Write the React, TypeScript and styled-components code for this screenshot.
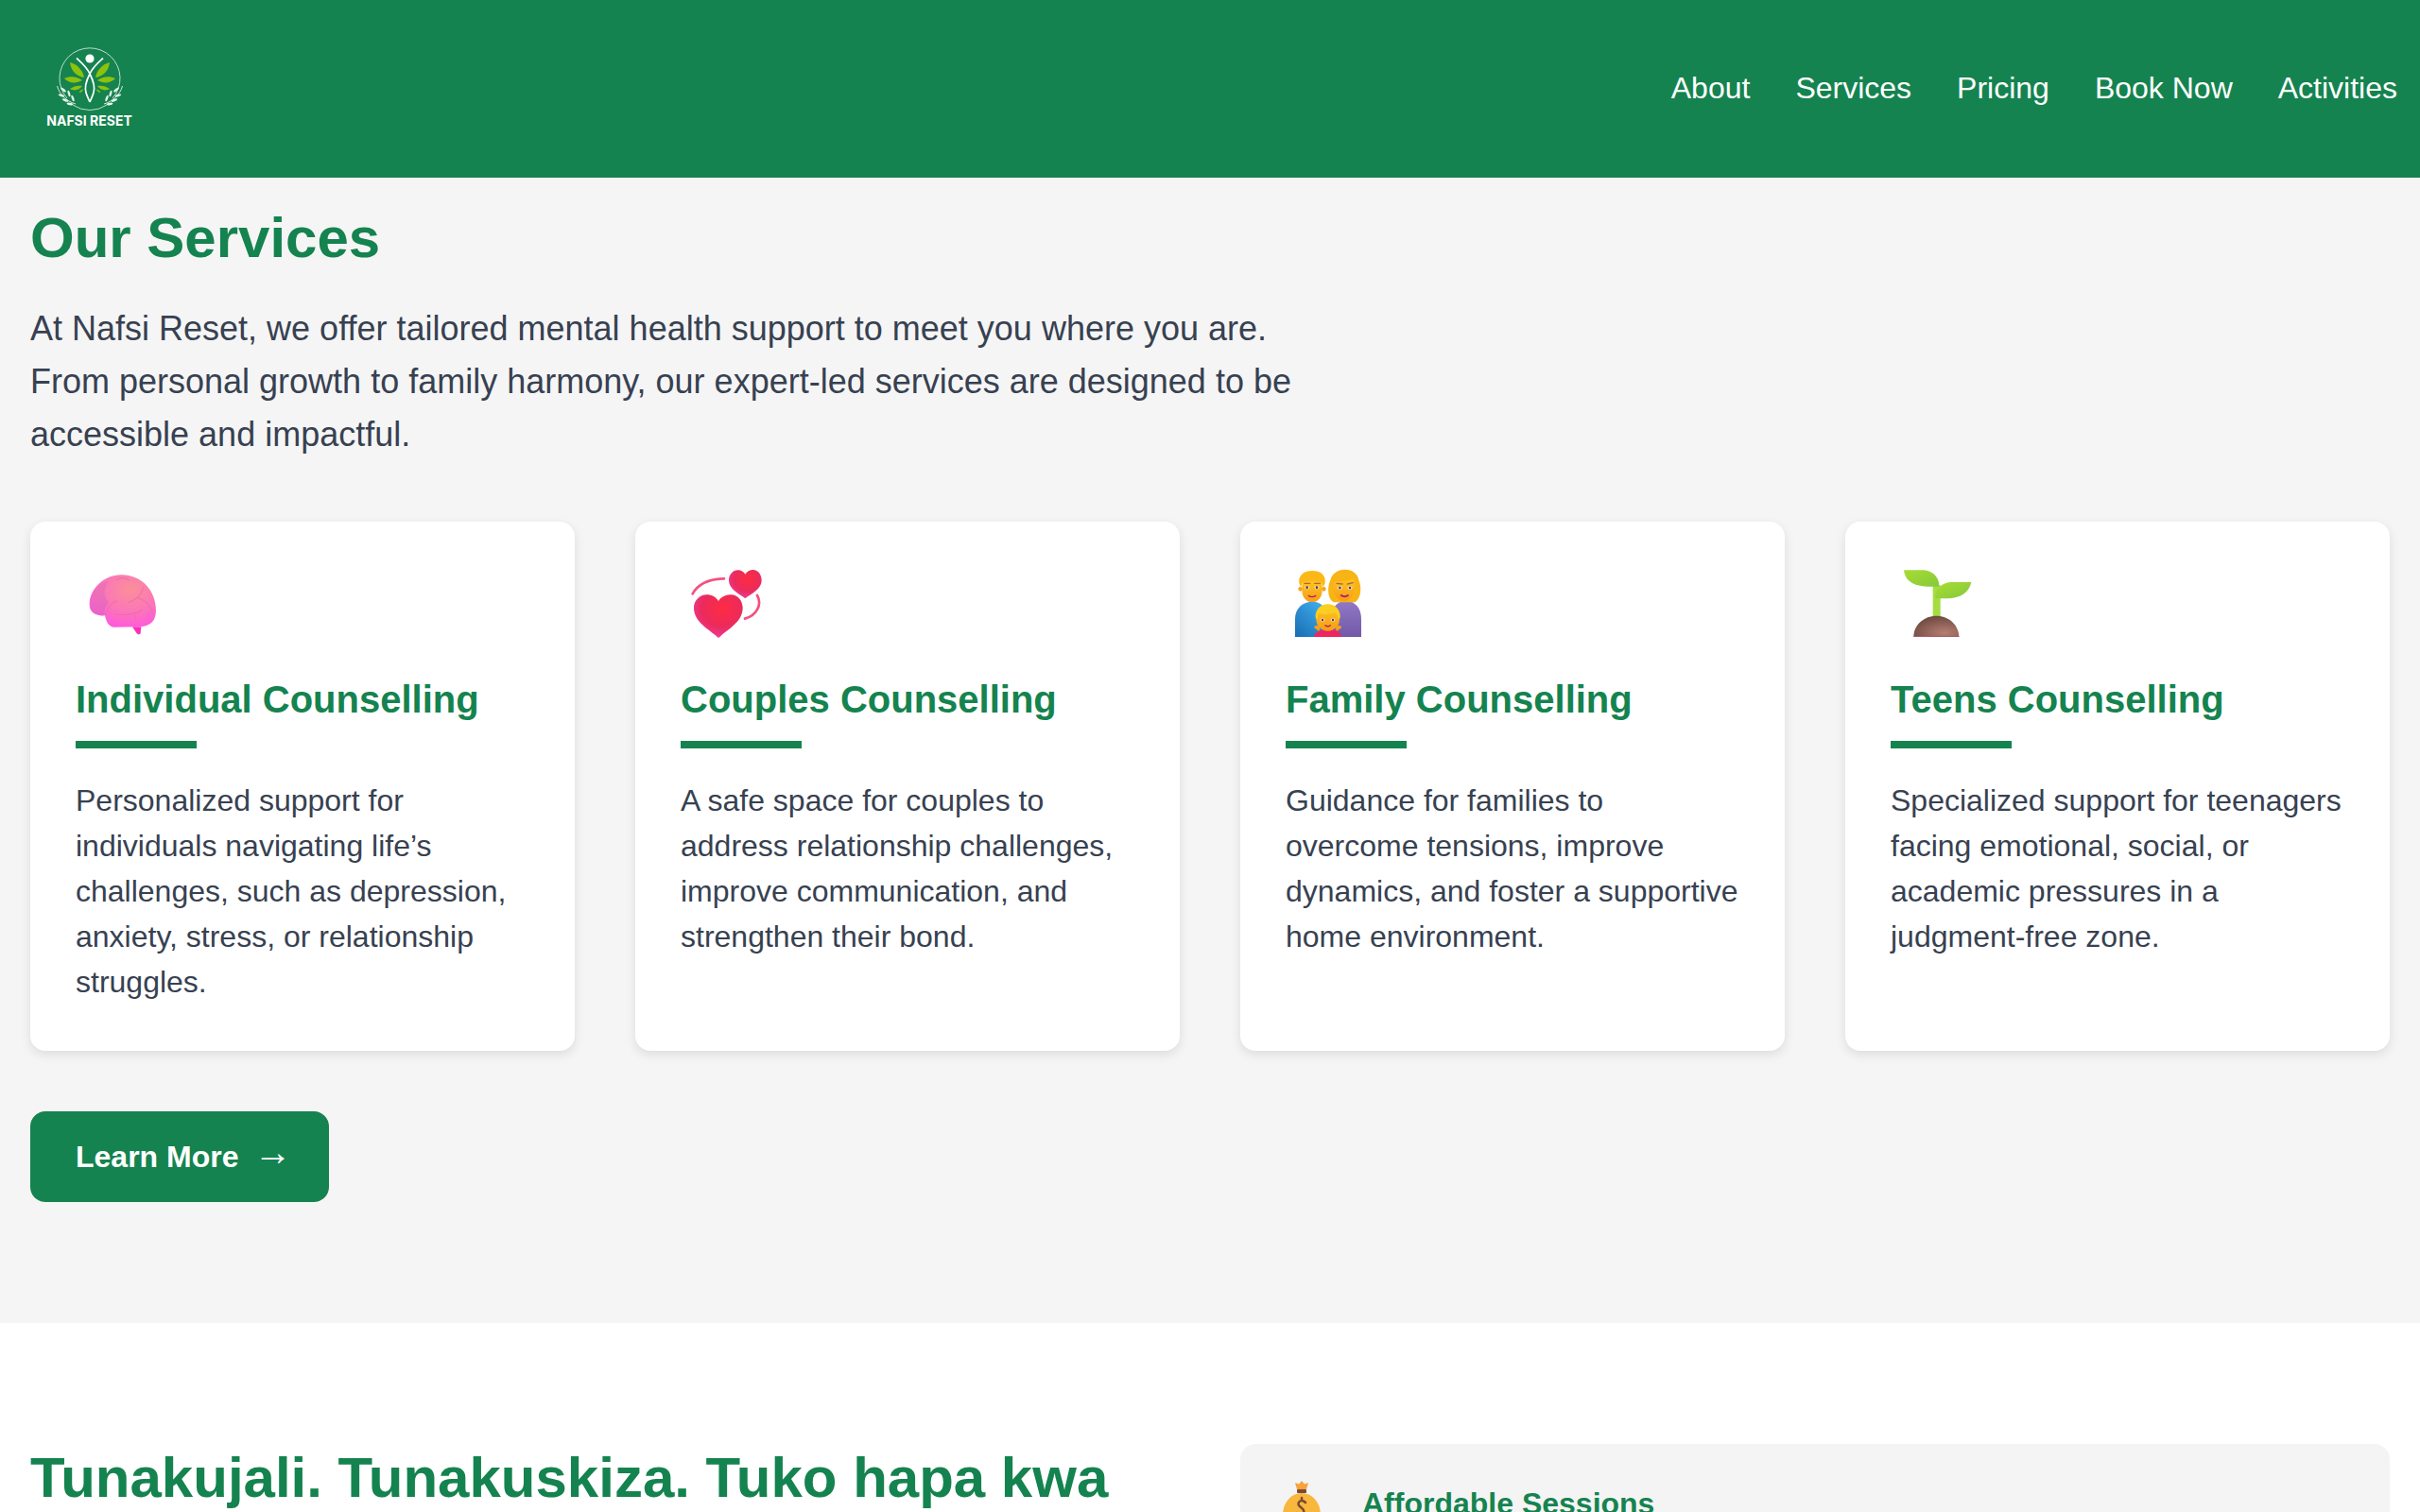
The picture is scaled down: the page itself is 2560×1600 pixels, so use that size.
import React from "react";
import styled, { createGlobalStyle } from "styled-components";

const GREEN = "#15834f";
const SLATE = "#374151";

const GlobalStyle = createGlobalStyle`
  html, body {
    margin: 0;
    padding: 0;
    height: 1600px;
    overflow: hidden;
    background: #ffffff;
    font-family: "Liberation Sans", Arial, sans-serif;
  }
  * {
    box-sizing: border-box;
  }
`;

const Header = styled.header`
  height: 188px;
  background: ${GREEN};
  display: flex;
  align-items: center;
  justify-content: space-between;
  padding-left: 50px;
`;

const Logo = styled.div`
  display: flex;
  flex-direction: column;
  align-items: center;
  width: 89px;
  margin-top: -4px;
`;

const LogoText = styled.span`
  font-family: Inter, "Liberation Sans", sans-serif;
  font-weight: 700;
  font-size: 14px;
  line-height: 16px;
  color: #fff;
  white-space: nowrap;
`;

const Nav = styled.nav`
  display: flex;
  gap: 48px;
  padding-right: 24px;
  margin-top: -3px;
`;

const NavLink = styled.a`
  font-size: 32px;
  line-height: 40px;
  color: #fff;
`;

const ServicesSection = styled.section`
  background: #f5f5f5;
  height: 1212px;
  padding: 28px 32px 0;
`;

const Title = styled.h2`
  margin: 0;
  font-size: 60px;
  line-height: 72px;
  font-weight: 700;
  color: ${GREEN};
`;

const Intro = styled.p`
  margin: 32px 0 0;
  width: 1400px;
  font-size: 36px;
  line-height: 56px;
  color: ${SLATE};
`;

const CardGrid = styled.div`
  display: grid;
  grid-template-columns: repeat(4, 576px);
  gap: 64px;
  margin-top: 64px;
`;

const Card = styled.article`
  height: 560px;
  background: #fff;
  border-radius: 16px;
  padding: 48px;
  box-shadow: 0 4px 12px rgba(0, 0, 0, 0.1);
`;

const CardIcon = styled.div`
  height: 80px;
`;

const CardTitle = styled.h3`
  margin: 36px 0 0;
  font-size: 40px;
  line-height: 48px;
  font-weight: 700;
  color: ${GREEN};
`;

const Rule = styled.div`
  width: 128px;
  height: 8px;
  margin-top: 20px;
  background: ${GREEN};
`;

const CardText = styled.p`
  margin: 31px 0 0;
  font-size: 32px;
  line-height: 48px;
  color: ${SLATE};
`;

const LearnMore = styled.a`
  display: inline-flex;
  align-items: center;
  gap: 16px;
  height: 96px;
  margin-top: 64px;
  padding: 0 48px;
  border-radius: 16px;
  background: ${GREEN};
  color: #fff;
  font-size: 32px;
  font-weight: 700;
`;

const Arrow = styled.span`
  width: 32px;
  margin-top: -10px;
  font-size: 40px;
  font-weight: 400;
  line-height: 40px;
  text-align: left;
  white-space: nowrap;
`;

const TaglineSection = styled.section`
  display: grid;
  grid-template-columns: 1216px 1216px;
  gap: 64px;
  padding: 128px 32px 0;
  background: #fff;
`;

const Tagline = styled.h2`
  margin: 0;
  font-size: 60px;
  line-height: 72px;
  font-weight: 700;
  white-space: nowrap;
  color: ${GREEN};
`;

const Perk = styled.div`
  display: flex;
  gap: 44px;
  height: 200px;
  padding: 39px 45px;
  background: #f4f4f4;
  border-radius: 16px;
`;

const PerkTitle = styled.h4`
  margin: 4px 0 0;
  font-size: 32px;
  line-height: 40px;
  font-weight: 700;
  color: ${GREEN};
`;

const IconSvg = styled.svg`
  display: block;
  overflow: visible;
`;

const leafPaths = [
  "M73 66 C81 68 87 75 88 82 C80 81 74 75 73 66 Z",
  "M67 83 C73 80 81 81 86 85 C79 89 72 88 67 83 Z",
  "M73 94 C77 91 82 90 86 91 C83 95 78 97 73 94 Z",
  "M82.5 98 C83 96 85 95 87 94.5 C87 96 85 98 82.5 98 Z",
];

const sprigLeaves = [
  [66, 95, 40],
  [64, 101, 15],
  [72, 99, 75],
  [68, 106, 20],
  [76, 104, 70],
  [73, 110, 10],
];

const LogoHalf = () => (
  <>
    {leafPaths.map((d) => (
      <path key={d} d={d} fill="#8cc20c" />
    ))}
    <path d="M80 61.5 C85 66 91 71 94 78 C98 86 100 92 98 98 C97 102 95 105 94 108" fill="none" stroke="#fff" strokeWidth="1.7" />
    <path d="M59.5 91 C62 100 69 107 79 110" fill="none" stroke="#fff" strokeWidth="0.8" />
    {sprigLeaves.map(([x, y, r]) => (
      <ellipse key={`${x}-${y}`} cx={x} cy={y} rx="3.4" ry="1.2" fill="#e8f4ec" transform={`rotate(${r} ${x} ${y})`} />
    ))}
  </>
);

const LogoMark = () => (
  <IconSvg width="76" height="72" viewBox="56 48 76 72">
    <path d="M70 104 A32 32 0 1 1 118 104 M76 111 A32 32 0 0 0 112 111" fill="none" stroke="#e6f2ea" strokeWidth="0.8" />
    <circle cx="94" cy="62" r="4.6" fill="#fff" />
    <LogoHalf />
    <g transform="translate(188 0) scale(-1 1)">
      <LogoHalf />
    </g>
  </IconSvg>
);

// card icons share one viewBox, 3 units to a pixel
const Emoji: React.FC<{ children: React.ReactNode }> = ({ children }) => (
  <IconSvg width="96" height="80" viewBox="60 60 288 240">
    {children}
  </IconSvg>
);

const BrainIcon = () => (
  <Emoji>
    <defs>
      <radialGradient id="brainFill" cx="0.62" cy="0.28" r="0.8">
        <stop offset="0" stopColor="#fb8f98" />
        <stop offset="0.5" stopColor="#fb78b6" />
        <stop offset="1" stopColor="#ff55e0" />
      </radialGradient>
      <linearGradient id="brainLobe" x1="0" y1="0" x2="1" y2="1">
        <stop offset="0" stopColor="#e676a8" />
        <stop offset="1" stopColor="#c95cc4" />
      </linearGradient>
    </defs>
    <path d="M240 250 L268 250 L266 270 C264 276 258 275 254 271 Z" fill="#ff2fb4" />
    <path d="M104 178 C104 130 150 85 205 85 C270 85 315 135 315 198 C315 235 292 250 260 250 L182 251 C168 251 158 238 153 214 C125 216 103 205 104 178 Z" fill="url(#brainFill)" />
    <path d="M108 170 C112 130 135 110 165 104 C150 125 145 150 165 170 C150 190 150 205 153 214 C125 216 103 205 108 170 Z" fill="url(#brainLobe)" opacity="0.45" />
    <path d="M190 102 C198 92 216 92 230 102 M275 125 C268 150 252 165 228 172 M258 158 C280 165 298 180 305 208 M190 168 C168 175 160 195 155 210 M188 210 C212 214 250 212 272 196 M248 212 L250 226" fill="none" stroke="#ee6aa8" strokeWidth="3" strokeLinecap="round" />
  </Emoji>
);

const HeartsIcon = () => (
  <Emoji>
    <defs>
      <radialGradient id="heartFill" cx="0.58" cy="0.32" r="0.78">
        <stop offset="0" stopColor="#ff2b43" />
        <stop offset="0.55" stopColor="#ea2b5c" />
        <stop offset="1" stopColor="#f23fb0" />
      </radialGradient>
    </defs>
    <path d="M180 285 C150 258 102 235 102 190 C102 165 122 148 142 148 C160 148 172 156 180 168 C188 156 200 148 220 148 C242 148 257 168 257 190 C257 235 210 258 180 285 Z" fill="url(#heartFill)" />
    <path d="M265 160 C245 145 213 130 213 103 C213 84 226 70 242 70 C252 70 260 75 265 83 C270 75 280 69 290 69 C306 69 317 84 317 103 C317 130 285 145 265 160 Z" fill="url(#heartFill)" />
    <path d="M98 145 C115 115 150 98 198 97 M303 150 C320 180 300 215 264 224" fill="none" stroke="#f4517f" strokeWidth="8" strokeLinecap="round" />
  </Emoji>
);

const FamilyIcon = () => (
  <Emoji>
    <defs>
      <linearGradient id="dadShirt" x1="0.9" y1="0" x2="0.1" y2="1">
        <stop offset="0" stopColor="#3fb0f0" />
        <stop offset="1" stopColor="#1b6fb4" />
      </linearGradient>
      <linearGradient id="mumShirt" x1="0.5" y1="0" x2="0.5" y2="1">
        <stop offset="0" stopColor="#9079c8" />
        <stop offset="1" stopColor="#7358a6" />
      </linearGradient>
      <linearGradient id="skin" x1="0.5" y1="0" x2="0.5" y2="1">
        <stop offset="0" stopColor="#fdc51f" />
        <stop offset="1" stopColor="#f99a1a" />
      </linearGradient>
    </defs>
    <path d="M90 282 L90 225 C90 190 115 170 145 170 C175 170 190 190 190 225 L190 282 Z" fill="url(#dadShirt)" />
    <circle cx="107" cy="130" r="7" fill="#f6a517" />
    <circle cx="181" cy="130" r="7" fill="#f6a517" />
    <path d="M112 105 L176 105 L176 135 C176 158 160 172 144 172 C128 172 112 158 112 135 Z" fill="url(#skin)" />
    <path d="M103 112 C99 85 120 72 145 72 C170 72 189 85 185 112 L180 124 L174 108 C155 104 132 104 114 108 L108 124 Z" fill="#fdb716" />
    <path d="M120 112 L137 112 M152 112 L169 112" stroke="#b4663a" strokeWidth="4" strokeLinecap="round" />
    <ellipse cx="128" cy="125" rx="8" ry="5" fill="#efe6dc" />
    <ellipse cx="159" cy="125" rx="8" ry="5" fill="#efe6dc" />
    <circle cx="128" cy="125" r="4" fill="#4e3d3a" />
    <circle cx="159" cy="125" r="4" fill="#4e3d3a" />
    <path d="M133 151 C140 156 148 156 155 151" fill="none" stroke="#a31f63" strokeWidth="4" strokeLinecap="round" />
    <path d="M205 282 L205 215 C205 190 225 168 250 168 C280 168 300 190 300 225 L300 282 Z" fill="url(#mumShirt)" />
    <path d="M248 68 C272 68 290 82 292 102 C302 122 300 160 280 172 L212 172 C192 160 192 122 202 102 C206 82 225 68 248 68 Z" fill="#f8b414" />
    <path d="M214 108 C232 106 262 102 274 98 C280 106 280 116 280 126 C280 150 262 168 246 168 C228 168 212 150 212 126 Z" fill="url(#skin)" />
    <path d="M222 112 L240 114 M256 114 L274 110" stroke="#b4663a" strokeWidth="4" strokeLinecap="round" />
    <ellipse cx="232" cy="126" rx="8" ry="5" fill="#efe6dc" />
    <ellipse cx="264" cy="126" rx="8" ry="5" fill="#efe6dc" />
    <circle cx="232" cy="126" r="4" fill="#4e3d3a" />
    <circle cx="264" cy="126" r="4" fill="#4e3d3a" />
    <path d="M236 150 C243 155 251 155 258 150" fill="none" stroke="#a31f63" strokeWidth="5" strokeLinecap="round" />
    <path d="M150 282 C152 266 170 258 194 258 C218 258 235 266 237 282 Z" fill="#ee2660" />
    <path d="M150 252 C155 242 165 244 170 252 L166 264 Z M238 252 C233 242 223 244 218 252 L222 264 Z" fill="#f6a018" />
    <circle cx="194" cy="226" r="37" fill="url(#skin)" />
    <path d="M155 222 C152 196 172 178 194 178 C216 178 236 196 233 222 L226 226 C226 214 222 208 216 204 C200 212 178 212 166 206 C162 212 162 220 162 226 Z" fill="#fbce22" />
    <ellipse cx="177" cy="228" rx="7" ry="5" fill="#efe6dc" />
    <ellipse cx="210" cy="228" rx="7" ry="5" fill="#efe6dc" />
    <circle cx="177" cy="228" r="3.6" fill="#4e3d3a" />
    <circle cx="210" cy="228" r="3.6" fill="#4e3d3a" />
    <path d="M186 245 C191 249 197 249 202 245" fill="none" stroke="#a31f63" strokeWidth="4" strokeLinecap="round" />
  </Emoji>
);

const SeedlingIcon = () => (
  <Emoji>
    <defs>
      <linearGradient id="sproutLeaf" x1="0" y1="0" x2="1" y2="1">
        <stop offset="0" stopColor="#a8dc34" />
        <stop offset="1" stopColor="#86c93a" />
      </linearGradient>
      <radialGradient id="soilFill" cx="0.68" cy="0.8" r="0.8">
        <stop offset="0" stopColor="#b67d72" />
        <stop offset="1" stopColor="#6e4a40" />
      </radialGradient>
    </defs>
    <rect x="194" y="118" width="24" height="100" fill="#a5dd40" />
    <path d="M102 70 L165 70 C195 72 215 95 214 122 L180 122 C135 122 105 105 102 70 Z" fill="url(#sproutLeaf)" />
    <path d="M316 108 C310 140 280 160 240 160 L202 160 C198 130 225 108 255 108 Z" fill="url(#sproutLeaf)" />
    <path d="M133 282 C133 245 165 215 205 215 C245 215 277 245 277 282 Z" fill="url(#soilFill)" />
    <rect x="133" y="279" width="144" height="3" fill="#a35a6c" />
  </Emoji>
);

const MoneyBagIcon = () => (
  <IconSvg width="40" height="48" viewBox="0 0 40 48">
    <path d="M15 9 L13 2 L17 3.5 L20 0 L23 3.5 L27 2 L25 9 Z" fill="#f9a23a" />
    <rect x="15" y="9" width="10" height="4" rx="1" fill="#7b4a34" />
    <path d="M20 13 C32 13 40 24 40 36 C40 46 32 50 20 50 C8 50 0 46 0 36 C0 24 8 13 20 13 Z" fill="#f8b83d" />
    <path d="M24 23 C20 19 15 22 17 26 C19 29 24 30 22 34 C20 37 17 36 15 34 M20 18 L20 21" fill="none" stroke="#7b4a34" strokeWidth="2.5" strokeLinecap="round" />
  </IconSvg>
);

const services = [
  {
    title: "Individual Counselling",
    icon: <BrainIcon />,
    text: "Personalized support for individuals navigating life\u2019s challenges, such as depression, anxiety, stress, or relationship struggles.",
  },
  {
    title: "Couples Counselling",
    icon: <HeartsIcon />,
    text: "A safe space for couples to address relationship challenges, improve communication, and strengthen their bond.",
  },
  {
    title: "Family Counselling",
    icon: <FamilyIcon />,
    text: "Guidance for families to overcome tensions, improve dynamics, and foster a supportive home environment.",
  },
  {
    title: "Teens Counselling",
    icon: <SeedlingIcon />,
    text: "Specialized support for teenagers facing emotional, social, or academic pressures in a judgment-free zone.",
  },
];

const navItems = ["About", "Services", "Pricing", "Book Now", "Activities"];

const App: React.FC = () => {
  return (
    <>
      <GlobalStyle />
      <Header>
        <Logo>
          <LogoMark />
          <LogoText>NAFSI RESET</LogoText>
        </Logo>
        <Nav>
          {navItems.map((item) => (
            <NavLink key={item}>{item}</NavLink>
          ))}
        </Nav>
      </Header>
      <ServicesSection>
        <Title>Our Services</Title>
        <Intro>
          At Nafsi Reset, we offer tailored mental health support to meet you where you are. From personal growth to family harmony, our expert-led services are designed to be accessible and impactful.
        </Intro>
        <CardGrid>
          {services.map((service) => (
            <Card key={service.title}>
              <CardIcon>{service.icon}</CardIcon>
              <CardTitle>{service.title}</CardTitle>
              <Rule />
              <CardText>{service.text}</CardText>
            </Card>
          ))}
        </CardGrid>
        <LearnMore>
          Learn More <Arrow>{"\u2192"}</Arrow>
        </LearnMore>
      </ServicesSection>
      <TaglineSection>
        <Tagline>Tunakujali. Tunakuskiza. Tuko hapa kwa</Tagline>
        <Perk>
          <MoneyBagIcon />
          <PerkTitle>Affordable Sessions</PerkTitle>
        </Perk>
      </TaglineSection>
    </>
  );
};

export default App;
